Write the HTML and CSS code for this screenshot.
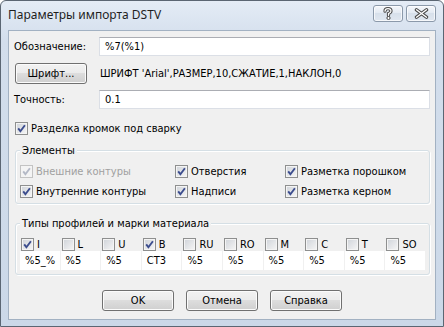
FILE: index.html
```html
<!DOCTYPE html>
<html lang="ru">
<head>
    <meta charset="UTF-8">
    <title>Параметры импорта DSTV</title>
    <link rel="stylesheet" href="styles.css">
</head>
<body>
    <div class="window">
        <div class="titlebar">
            <span class="title">Параметры импорта DSTV</span>
            <div class="caption-buttons">
                <span class="cap-btn">
                    <svg width="12" height="13" viewBox="0 0 12 13">
                        <path d="M3 4.2 Q3 1.6 6 1.6 Q9 1.6 9 4 Q9 5.6 6.5 6.6 L6.5 8.4" fill="none" stroke="#4a4a4a" stroke-width="3.2" stroke-linecap="round"/>
                        <path d="M3 4.2 Q3 1.6 6 1.6 Q9 1.6 9 4 Q9 5.6 6.5 6.6 L6.5 8.4" fill="none" stroke="#fff" stroke-width="1.2" stroke-linecap="round"/>
                        <circle cx="6.5" cy="11" r="1.6" fill="#fff" stroke="#4a4a4a" stroke-width="1"/>
                    </svg>
                </span>
                <span class="cap-btn">
                    <svg width="15" height="11" viewBox="0 0 15 11">
                        <path d="M2.5 1.8 L12.5 9.2 M12.5 1.8 L2.5 9.2" fill="none" stroke="#4a4a4a" stroke-width="3.4" stroke-linecap="round"/>
                        <path d="M2.5 1.8 L12.5 9.2 M12.5 1.8 L2.5 9.2" fill="none" stroke="#fff" stroke-width="1.4" stroke-linecap="round"/>
                    </svg>
                </span>
            </div>
        </div>

        <div class="client">
            <div class="field-row">
                <span class="field-label">Обозначение:</span>
                <div class="textbox">%7(%1)</div>
            </div>

            <div class="font-row">
                <button class="btn">Шрифт...</button>
                <span class="font-info">ШРИФТ 'Arial',РАЗМЕР,10,СЖАТИЕ,1,НАКЛОН,0</span>
            </div>

            <div class="field-row precision-row">
                <span class="field-label">Точность:</span>
                <div class="textbox">0.1</div>
            </div>

            <div class="check-item weld-row">
                <span class="check"><svg viewBox="0 0 11 11"><path d="M2.2 5.4 L4.4 8.2 L8.9 2.2"/></svg></span>
                Разделка кромок под сварку
            </div>

            <div class="group elements">
                <div class="group-title">Элементы</div>
                <div class="elements-grid">
                    <div class="check-item disabled">
                        <span class="check"><svg viewBox="0 0 11 11"><path d="M2.2 5.4 L4.4 8.2 L8.9 2.2"/></svg></span>
                        Внешние контуры
                    </div>
                    <div class="check-item">
                        <span class="check"><svg viewBox="0 0 11 11"><path d="M2.2 5.4 L4.4 8.2 L8.9 2.2"/></svg></span>
                        Отверстия
                    </div>
                    <div class="check-item">
                        <span class="check"><svg viewBox="0 0 11 11"><path d="M2.2 5.4 L4.4 8.2 L8.9 2.2"/></svg></span>
                        Разметка порошком
                    </div>
                    <div class="check-item">
                        <span class="check"><svg viewBox="0 0 11 11"><path d="M2.2 5.4 L4.4 8.2 L8.9 2.2"/></svg></span>
                        Внутренние контуры
                    </div>
                    <div class="check-item">
                        <span class="check"><svg viewBox="0 0 11 11"><path d="M2.2 5.4 L4.4 8.2 L8.9 2.2"/></svg></span>
                        Надписи
                    </div>
                    <div class="check-item">
                        <span class="check"><svg viewBox="0 0 11 11"><path d="M2.2 5.4 L4.4 8.2 L8.9 2.2"/></svg></span>
                        Разметка керном
                    </div>
                </div>
            </div>

            <div class="group profiles">
                <div class="group-title">Типы профилей и марки материала</div>
                <div class="profile-grid">
                    <div class="check-item"><span class="check"><svg viewBox="0 0 11 11"><path d="M2.2 5.4 L4.4 8.2 L8.9 2.2"/></svg></span>I</div>
                    <div class="check-item"><span class="check"></span>L</div>
                    <div class="check-item"><span class="check"></span>U</div>
                    <div class="check-item"><span class="check"><svg viewBox="0 0 11 11"><path d="M2.2 5.4 L4.4 8.2 L8.9 2.2"/></svg></span>B</div>
                    <div class="check-item"><span class="check"></span>RU</div>
                    <div class="check-item"><span class="check"></span>RO</div>
                    <div class="check-item"><span class="check"></span>M</div>
                    <div class="check-item"><span class="check"></span>C</div>
                    <div class="check-item"><span class="check"></span>T</div>
                    <div class="check-item"><span class="check"></span>SO</div>

                    <div class="cell">%5_%</div>
                    <div class="cell">%5</div>
                    <div class="cell">%5</div>
                    <div class="cell">СТ3</div>
                    <div class="cell">%5</div>
                    <div class="cell">%5</div>
                    <div class="cell">%5</div>
                    <div class="cell">%5</div>
                    <div class="cell">%5</div>
                    <div class="cell">%5</div>
                </div>
            </div>

            <div class="dialog-buttons">
                <button class="btn">OK</button>
                <button class="btn">Отмена</button>
                <button class="btn">Справка</button>
            </div>
        </div>
    </div>
</body>
</html>
```

FILE: styles.css
```css
* {
    margin: 0;
    padding: 0;
    box-sizing: border-box;
}

body {
    background: #ffffff;
    font-family: "DejaVu Sans Condensed", "DejaVu Sans", sans-serif;
    font-size: 11px;
    color: #000;
}

.window {
    width: 444px;
    height: 327px;
    border: 1px solid #5b6673;
    border-radius: 6px 6px 0 0;
    background: linear-gradient(#e4ecf6, #d3deec 40px, #cbd8e8);
    padding: 0 7px 6px 7px;
    display: flex;
    flex-direction: column;
}

.titlebar {
    height: 29px;
    display: flex;
    align-items: flex-start;
    justify-content: space-between;
}

.title {
    font-family: "Noto Sans", sans-serif;
    font-size: 12px;
    color: #1f1f1f;
    margin-top: 5px;
}

.caption-buttons {
    display: flex;
    gap: 3px;
    margin-top: 4px;
}

.cap-btn {
    width: 30px;
    height: 17px;
    border: 1px solid #8b99aa;
    border-radius: 3px;
    background: linear-gradient(#f4f7fb, #e2e9f2 50%, #d7e0eb 50%, #e0e7f0);
    box-shadow: inset 0 0 0 1px rgba(255, 255, 255, 0.7);
    display: flex;
    align-items: center;
    justify-content: center;
}

.client {
    flex: 1;
    background: #f0f0f0;
    border: 1px solid #a2b1c2;
    padding: 6px 5px 0 5px;
    display: flex;
    flex-direction: column;
}

.field-row {
    display: flex;
    align-items: center;
    height: 19px;
}

.field-label {
    width: 85px;
}

.textbox {
    flex: 1;
    height: 19px;
    line-height: 17px;
    background: #fff;
    border: 1px solid #dbdfe6;
    border-top-color: #abadb3;
    padding-left: 5px;
}

.font-row {
    display: flex;
    align-items: center;
    margin-top: 7px;
    padding-left: 1px;
}

.font-info {
    margin-left: 13px;
}

.precision-row {
    margin-top: 6px;
}

.btn {
    width: 72px;
    height: 21px;
    font-family: inherit;
    font-size: 11px;
    color: #000;
    border: 1px solid #707070;
    border-radius: 3px;
    background: linear-gradient(#f2f2f2, #ebebeb 50%, #dddddd 50%, #cfcfcf);
    box-shadow: inset 0 0 0 1px #fbfbfb;
}

.check-item {
    display: flex;
    align-items: center;
    gap: 3px;
    height: 13px;
    white-space: nowrap;
}

.check {
    width: 13px;
    height: 13px;
    flex: none;
    border: 1px solid #8e8f8f;
    background: linear-gradient(135deg, #cfd3d9, #f6f6f6);
    box-shadow: inset 0 0 0 1px #f4f4f4;
    display: flex;
    align-items: center;
    justify-content: center;
}

.check svg {
    width: 11px;
    height: 11px;
}

.check path {
    fill: none;
    stroke: #3c4d8e;
    stroke-width: 1.9;
}

.check-item.disabled {
    color: #a0a0a0;
}

.check-item.disabled .check {
    border-color: #c3c3c3;
    background: #f4f4f4;
}

.check-item.disabled .check path {
    stroke: #b4b9c6;
}

.weld-row {
    margin-top: 13px;
    margin-left: 1px;
}

.group {
    margin-left: 1px;
    border: 1px solid #d5dfe5;
    border-radius: 3px;
    box-shadow: inset 1px 1px 0 #fff, 1px 1px 0 #fff;
    padding: 0 4px;
}

.group-title {
    width: fit-content;
    margin-top: -7px;
    line-height: 13px;
    padding: 0 2px;
    background: #f0f0f0;
}

.elements {
    margin-top: 15px;
    padding-bottom: 5px;
}

.elements-grid {
    display: grid;
    grid-template-columns: 155px 110px 1fr;
    row-gap: 7px;
    margin-top: 8px;
}

.profiles {
    margin-top: 19px;
    padding-bottom: 4px;
}

.profile-grid {
    display: grid;
    grid-template-columns: repeat(10, 1fr);
    column-gap: 1px;
    width: 405px;
    margin-top: 8px;
}

.profile-grid .check-item {
    padding-left: 1px;
}

.cell {
    height: 19px;
    line-height: 19px;
    background: #fff;
    padding-left: 5px;
    overflow: hidden;
    white-space: nowrap;
}

.dialog-buttons {
    display: flex;
    justify-content: center;
    gap: 12px;
    margin-top: 15px;
}
```
